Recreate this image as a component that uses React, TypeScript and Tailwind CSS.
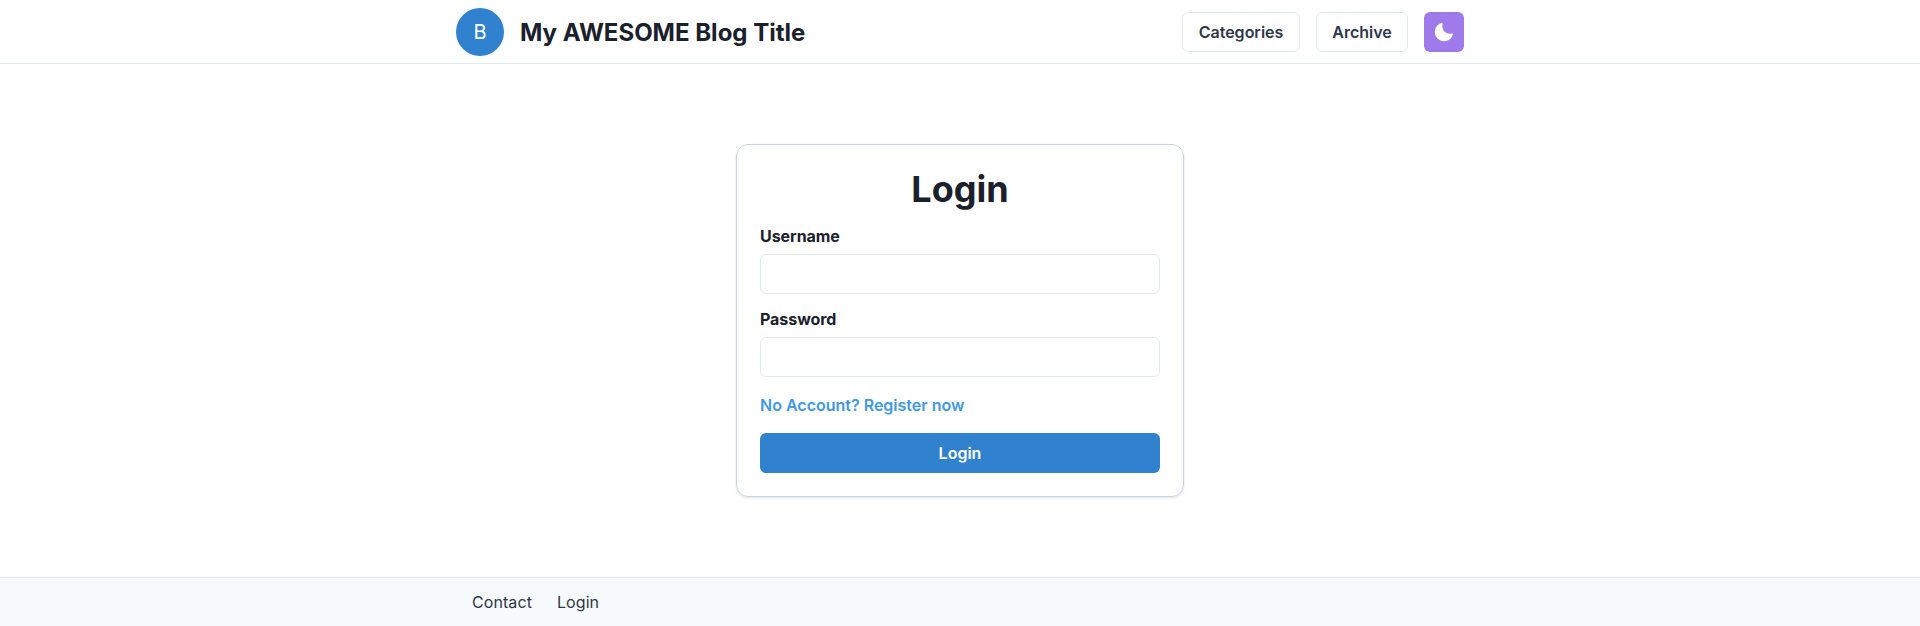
import React from "react";

function Field({ label, type }: { label: string; type: string }) {
  return (
    <label className="flex flex-col">
      <span className="mb-1 text-base leading-[27px] font-bold tracking-[-0.003em] text-[#1a202c]">{label}</span>
      <input type={type} className="h-10 w-full rounded-md border border-[#e2e8f0] px-4 outline-none" />
    </label>
  );
}

function MoonIcon() {
  return (
    <svg viewBox="0 0 24 24" className="size-5 text-white" fill="currentColor" aria-hidden="true">
      <path d="M21.4,13.7C20.6,13.9,19.8,14,19,14c-5,0-9-4-9-9c0-0.8,0.1-1.6,0.3-2.4c0.1-0.3,0-0.7-0.3-1 c-0.3-0.3-0.6-0.4-1-0.3C4.3,2.7,1,7.1,1,12c0,6.1,4.9,11,11,11c4.9,0,9.3-3.3,10.6-8.1c0.1-0.3,0-0.7-0.3-1 C22.1,13.7,21.7,13.6,21.4,13.7z" />
    </svg>
  );
}

export default function App() {
  return (
    <div className="flex min-h-screen flex-col bg-white font-['Inter',sans-serif] text-[#1a202c]">
      <header className="h-16 border-b border-[#e2e8f0]">
        <div className="mx-auto flex h-full w-[1008px] items-center justify-between">
          <div className="flex items-center gap-4">
            <div className="flex size-12 items-center justify-center rounded-full bg-[#3182ce] text-[20px] leading-none text-white">B</div>
            <h1 className="pt-[3px] text-2xl leading-8 font-bold">My AWESOME Blog Title</h1>
          </div>
          <nav className="flex items-center gap-4">
            <button className="h-10 w-[118px] rounded-md border border-[#e2e8f0] font-semibold text-[#2d3748]">Categories</button>
            <button className="h-10 w-[92px] rounded-md border border-[#e2e8f0] font-semibold text-[#2d3748]">Archive</button>
            <button aria-label="Dark mode" className="flex size-10 items-center justify-center rounded-md bg-[#9f7aea]"><MoonIcon /></button>
          </nav>
        </div>
      </header>
      <main className="flex flex-1 items-center justify-center">
        <form className="flex w-[448px] flex-col rounded-xl border border-[#cbd5e0] p-[23px] shadow-sm">
          <h2 className="mb-3 text-center text-4xl leading-[43px] font-bold">Login</h2>
          <Field label="Username" type="text" />
          <div className="h-3" />
          <Field label="Password" type="password" />
          <a className="mt-4 font-semibold text-[#4299e1]">No Account? Register now</a>
          <button type="button" className="mt-4 h-10 rounded-md bg-[#3182ce] font-semibold text-white">Login</button>
        </form>
      </main>
      <footer className="h-[49px] border-t border-[#e2e8f0] bg-[#f7fafc]">
        <div className="mx-auto flex h-full w-[1008px] items-center gap-[25px] px-4 tracking-[0.005em] text-[#2d3748]">
          <a>Contact</a>
          <a>Login</a>
        </div>
      </footer>
    </div>
  );
}
